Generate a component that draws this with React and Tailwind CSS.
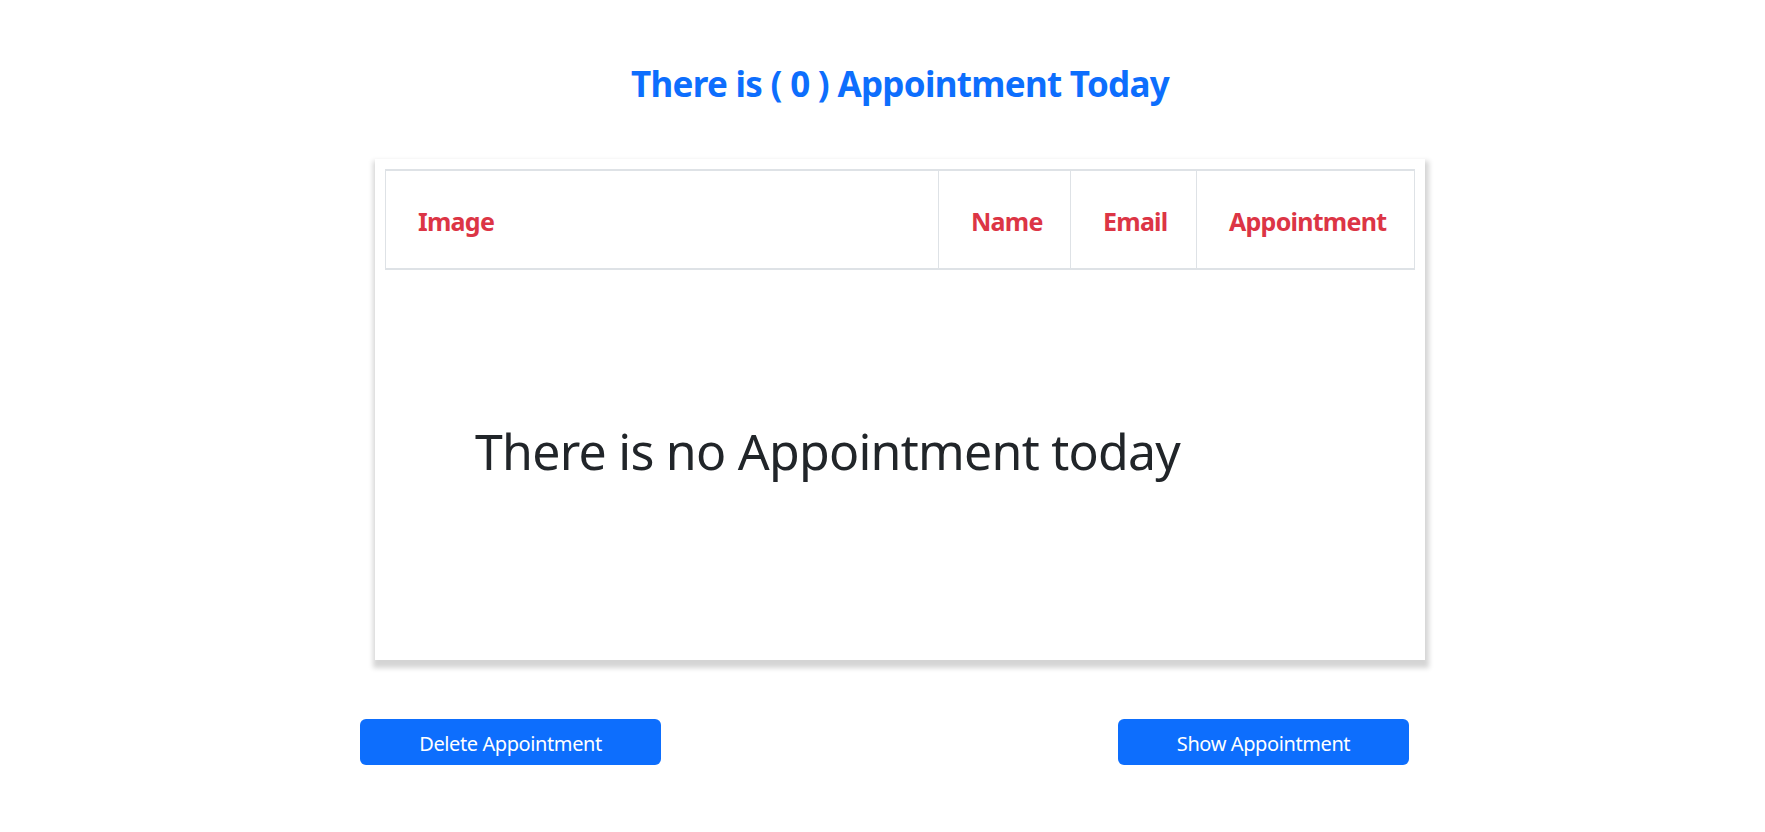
const headers = [
  { label: 'Image', cls: 'w-[552px] shrink-0' },
  { label: 'Name', cls: 'w-[132px] shrink-0 border-l border-[#dee2e6]' },
  { label: 'Email', cls: 'w-[126px] shrink-0 border-l border-[#dee2e6]' },
  { label: 'Appointment', cls: 'flex-1 min-w-0 border-l border-[#dee2e6]' },
]

const App = () => {
  return (
    <div className="min-h-screen bg-white font-['Noto_Sans','Open_Sans',sans-serif]">
      <div className="w-[1085px] mx-auto pl-[35px]">
        <h3 className="pt-[63px] text-center text-[35px] leading-[42px] font-bold text-[#0d6efd] tracking-[-0.02em]">
          There is ( 0 ) Appointment Today
        </h3>

        <div className="mt-[54px] w-[1050px] h-[501px] p-[10px] bg-white shadow-[1px_5px_5px_3px_rgba(0,0,0,0.17)]">
          <div className="flex h-[101px] border-x border-t-2 border-b-2 border-[#dee2e6]">
            {headers.map((h) => (
              <div key={h.label} className={`${h.cls} flex items-center pl-[32px] pt-[2px] whitespace-nowrap`}>
                <span className="text-[25px] leading-[30px] font-bold text-[#dc3545] tracking-[-0.03em]">
                  {h.label}
                </span>
              </div>
            ))}
          </div>
          <p className="mt-[151px] ml-[90px] text-[50px] leading-[60px] text-[#212529] tracking-[-0.015em]">
            There is no Appointment today
          </p>
        </div>
      </div>

      <div className="w-[1053px] mx-auto pl-[4px] mt-[59px] flex justify-between">
        <button className="w-[301px] h-[46px] pt-[3px] rounded-[6px] bg-[#0d6efd] text-white text-[20px] tracking-[-0.02em]">
          Delete Appointment
        </button>
        <button className="w-[291px] h-[46px] pt-[3px] rounded-[6px] bg-[#0d6efd] text-white text-[20px] tracking-[-0.02em]">
          Show Appointment
        </button>
      </div>
    </div>
  )
}

export default App
